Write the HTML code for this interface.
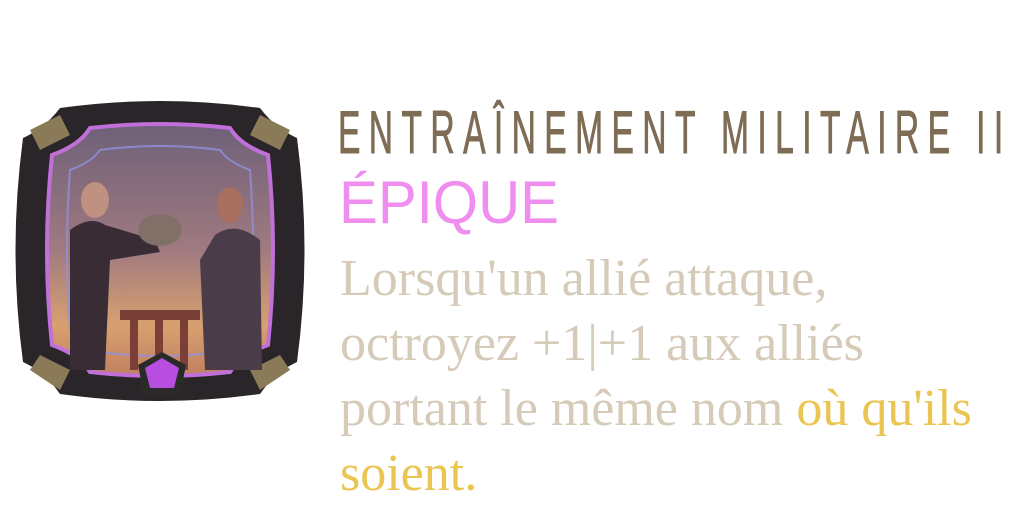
<!DOCTYPE html>
<html><head><meta charset="utf-8"><style>
html,body{margin:0;padding:0;background:#fff;width:1024px;height:512px;overflow:hidden;position:relative}
.t{position:absolute;left:338px;top:98px;font-family:"Liberation Sans",sans-serif;font-size:60px;color:#7f6c54;white-space:nowrap;transform-origin:0 0;transform:scaleX(0.56);letter-spacing:15px;line-height:70px;-webkit-text-stroke:1px #7f6c54}
.r{position:absolute;left:339px;top:168px;font-family:"Liberation Sans",sans-serif;font-size:60px;color:#f08ef0;white-space:nowrap;transform-origin:0 0;transform:scaleX(0.97);line-height:70px}
.b{position:absolute;left:340px;top:246px;font-family:"Liberation Serif",serif;font-size:52px;line-height:65px;color:#d6cab8;letter-spacing:0px;white-space:nowrap}
.y{color:#ebc552}
</style></head><body>
<svg width="320" height="330" viewBox="0 0 320 330" style="position:absolute;left:0;top:90px">
<defs>
<linearGradient id="sky" x1="0" y1="0" x2="0" y2="1">
<stop offset="0" stop-color="#6e6078"/><stop offset="0.5" stop-color="#a07a80"/><stop offset="0.8" stop-color="#d8a070"/><stop offset="1" stop-color="#c08060"/>
</linearGradient>
</defs>
<path d="M60 18 Q160 4 260 18 Q275 38 297 48 Q312 160 297 272 Q275 282 260 304 Q160 318 60 304 Q45 282 23 272 Q8 160 23 48 Q45 38 60 18Z" fill="#2a2528"/>
<path d="M30 40 L60 25 L70 45 L40 60Z M290 40 L260 25 L250 45 L280 60Z M30 280 L60 300 L70 280 L40 265Z M290 280 L260 300 L250 280 L280 265Z" fill="#8a7a58"/>
<path d="M90 38 Q160 30 230 38 Q240 55 268 65 Q278 160 268 255 Q240 265 230 282 Q160 290 90 282 Q80 265 52 255 Q42 160 52 65 Q80 55 90 38Z" fill="url(#sky)" stroke="#c070d8" stroke-width="4"/>
<path d="M100 60 Q160 52 220 60 Q228 72 250 80 Q256 160 250 240 Q228 248 220 262 Q160 270 100 262 Q92 248 70 240 Q64 160 70 80 Q92 72 100 60Z" fill="none" stroke="#9090e0" stroke-width="2" opacity="0.8"/>
<path d="M70 140 Q90 125 105 135 L155 150 L160 162 L110 170 L105 280 L70 280Z" fill="#3a2c34"/>
<ellipse cx="95" cy="110" rx="14" ry="18" fill="#c09080"/>
<ellipse cx="160" cy="140" rx="22" ry="16" fill="#807068"/>
<path d="M215 145 Q235 130 260 150 L262 280 L205 280 L200 170Z" fill="#4a3c48"/>
<ellipse cx="230" cy="115" rx="13" ry="18" fill="#a87060"/>
<rect x="120" y="220" width="80" height="10" fill="#7a4038"/>
<rect x="130" y="230" width="8" height="50" fill="#7a4038"/><rect x="155" y="230" width="8" height="50" fill="#7a4038"/><rect x="180" y="230" width="8" height="50" fill="#7a4038"/>
<path d="M138 275 L162 262 L186 275 L180 305 L144 305Z" fill="#2a2a28"/>
<path d="M145 278 L162 268 L179 278 L174 298 L150 298Z" fill="#b84ee0"/>
</svg>
<div class="t">ENTRAÎNEMENT MILITAIRE II</div>
<div class="r">ÉPIQUE</div>
<div class="b">Lorsqu'un allié attaque,<br>octroyez +1|+1 aux alliés<br>portant le même nom <span class="y">où qu'ils</span><br><span class="y">soient.</span></div>
</body></html>
